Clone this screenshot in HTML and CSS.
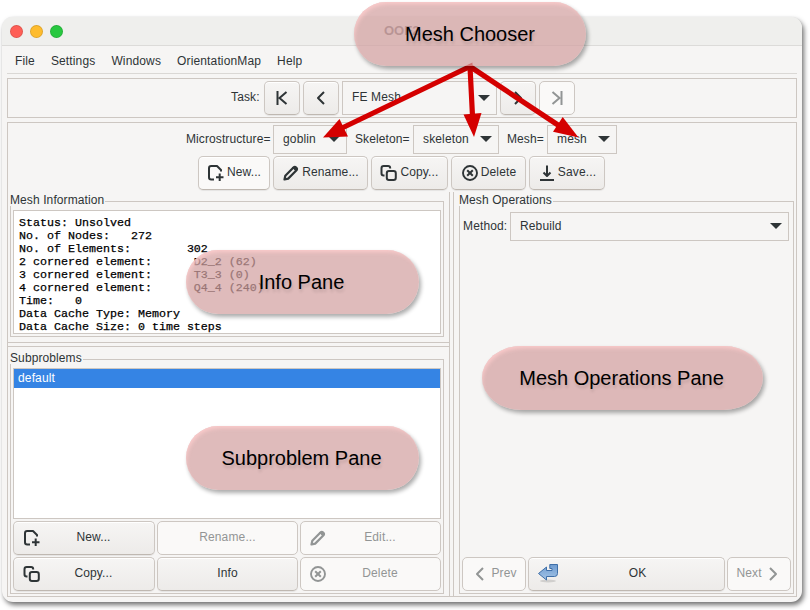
FILE: index.html
```html
<!DOCTYPE html>
<html lang="en">
<head>
<meta charset="utf-8">
<title>FE Mesh</title>
<link rel="stylesheet" href="styles.css">
</head>
<body>
<svg width="0" height="0" class="defs">
  <defs>
    <symbol id="i-new" viewBox="0 0 18 18"><path d="M7 15.500H4.200Q2 15.500 2 13.300V4.200Q2 2 4.200 2H10L14 6V7.500M12.700 9.500V17M9 13.200H16.500"/></symbol>
    <symbol id="i-pen" viewBox="0 0 18 18"><path d="M2.500 15.500L3.300 11.700L11.700 3.300Q12.800 2.300 14.200 3.500T14.500 6.300L6.200 14.600Z" stroke-width="2.200"/><path d="M10.500 3.500L14 3L15 5L13.800 7Z" fill="currentColor" stroke-width="1"/></symbol>
    <symbol id="i-copy" viewBox="0 0 18 18"><path d="M4.500 11.500H3.700Q1.500 11.500 1.500 9.300V4.200Q1.500 2 3.700 2H8Q10.200 2 10.200 4.200V4.500"/><rect x="6.800" y="7" width="9" height="9" rx="2.200"/></symbol>
    <symbol id="i-del" viewBox="0 0 18 18"><circle cx="9" cy="9" r="7" stroke-width="1.900"/><path d="M6.200 6.200L11.800 11.800M11.800 6.200L6.200 11.800" stroke-width="2"/></symbol>
    <symbol id="i-save" viewBox="0 0 18 18"><path d="M9 1.500V11.500M5.500 8.500L9 12L12.500 8.500M2 16H16"/></symbol>
    <symbol id="i-first" viewBox="0 0 18 18"><path d="M4.500 2V16M13.500 3L6.500 9L13.500 15"/></symbol>
    <symbol id="i-left" viewBox="0 0 18 18"><path d="M12 3L6 9L12 15"/></symbol>
    <symbol id="i-right" viewBox="0 0 18 18"><path d="M6 3L12 9L6 15"/></symbol>
    <symbol id="i-last" viewBox="0 0 18 18"><path d="M13.500 2V16M4.500 3L11.500 9L4.500 15"/></symbol>
    <linearGradient id="enter" x1="0" y1="0" x2="0" y2="1"><stop offset="0" stop-color="#6f9bd0"/><stop offset="1" stop-color="#a3c4e6"/></linearGradient>
  </defs>
</svg>
<div class="window">
  <header class="titlebar"><i class="dot red"></i><i class="dot yellow"></i><i class="dot green"></i><span class="wtitle">OOF2</span></header>
  <nav class="menubar"><span>File</span><span>Settings</span><span>Windows</span><span>OrientationMap</span><span>Help</span></nav>
  <section class="taskbar">
    <label>Task:</label>
    <button><svg><use href="#i-first"/></svg></button>
    <button><svg><use href="#i-left"/></svg></button>
    <div class="combo task">FE Mesh<b></b></div>
    <button><svg><use href="#i-right"/></svg></button>
    <button class="off"><svg><use href="#i-last"/></svg></button>
  </section>
  <main class="page">
    <div class="chooser">
      <label>Microstructure=</label><div class="combo c1">goblin<b></b></div>
      <label class="l2">Skeleton=</label><div class="combo c2">skeleton<b></b></div>
      <label class="l3">Mesh=</label><div class="combo c3">mesh<b></b></div>
    </div>
    <div class="tools">
      <button class="t1"><svg><use href="#i-new"/></svg>New...</button>
      <button class="t2"><svg><use href="#i-pen"/></svg>Rename...</button>
      <button class="t3"><svg><use href="#i-copy"/></svg>Copy...</button>
      <button class="t4"><svg><use href="#i-del"/></svg>Delete</button>
      <button class="t5"><svg><use href="#i-save"/></svg>Save...</button>
    </div>
    <div class="panes">
      <div class="left">
        <div class="pane infopane">
          <div class="frame"><h2>Mesh Information</h2>
<pre>Status: Unsolved
No. of Nodes:   272
No. of Elements:        302
2 cornered element:      D2_2 (62)
3 cornered element:      T3_3 (0)
4 cornered element:      Q4_4 (240)
Time:   0
Data Cache Type: Memory
Data Cache Size: 0 time steps</pre>
          </div>
        </div>
        <div class="pane subpane">
          <div class="frame"><h2>Subproblems</h2>
            <div class="list"><div class="row">default</div></div>
            <div class="grid">
              <button><svg><use href="#i-new"/></svg><span>New...</span></button>
              <button class="off plain"><span>Rename...</span></button>
              <button class="off"><svg><use href="#i-pen"/></svg><span>Edit...</span></button>
              <button><svg><use href="#i-copy"/></svg><span>Copy...</span></button>
              <button class="plain"><span>Info</span></button>
              <button class="off"><svg><use href="#i-del"/></svg><span>Delete</span></button>
            </div>
          </div>
        </div>
      </div>
      <div class="right">
        <div class="frame ops"><h2>Mesh Operations</h2>
          <div class="method"><label>Method:</label><div class="combo">Rebuild<b></b></div></div>
          <div class="nav">
            <button class="off prev"><svg><use href="#i-left"/></svg>Prev</button>
            <button class="ok"><svg class="enter" viewBox="0 0 22 20"><ellipse cx="11" cy="18" rx="8" ry="1.500" fill="#000" fill-opacity=".13" stroke="none"/><path d="M1.500 10.500L9.500 4V7.500H15V5.500H12.800V1.500H20.500V10.500Q20.500 13.500 17.500 13.500H9.500V17Z" fill="url(#enter)" stroke="#3f6fa8" stroke-width="1"/></svg><span>OK</span></button>
            <button class="off next">Next<svg><use href="#i-right"/></svg></button>
          </div>
        </div>
      </div>
    </div>
  </main>
</div>
<svg class="arrows" width="810" height="610" viewBox="0 0 810 610">
  <g stroke="#d40000" stroke-width="5.200" fill="none"><path d="M341 128.500L470 66.500L472.500 116"/><path d="M470 66.500L561 127"/></g>
  <g fill="#d40000"><path d="M323 137.500L339.500 119L348 136.500Z"/><path d="M474 137L463.500 114.500L481.500 113Z"/><path d="M578.500 137.500L562.700 117L553 131.700Z"/></g>
</svg>
<div class="pill p1">Mesh Chooser</div>
<div class="pill p2">Info Pane</div>
<div class="pill p3">Subproblem Pane</div>
<div class="pill p4">Mesh Operations Pane</div>
</body>
</html>
```
FILE: styles.css
```css
* { box-sizing: border-box; }
body { margin: 0; width: 810px; height: 610px; overflow: hidden; background: #fff; color: #2e3436; font: 12px/16px "Liberation Sans", Arial, sans-serif; letter-spacing: .14px; padding: 17px 0 0 2px; }
.defs { position: absolute; }
.window { width: 800px; height: 585px; background: #f6f5f4; border-radius: 11px; box-shadow: 2px 3px 5px rgba(0,0,0,.55), 0 0 1px rgba(0,0,0,.12); padding: 0 5px; }
.titlebar { height: 29px; margin: 0 -5px; padding-left: 8px; display: flex; align-items: center; gap: 7px; background: #efefed; border-bottom: 1px solid #dcdbd9; border-radius: 11px 11px 0 0; }
.dot { width: 13px; height: 13px; border-radius: 50%; border: .5px solid rgba(0,0,0,.12); }
.red { background: #ff5f57; } .yellow { background: #febc2e; } .green { background: #28c840; }
.wtitle { flex: 1; padding-left: 314px; font: bold 13px/28px "Liberation Sans", sans-serif; letter-spacing: 0; color: #757575; }
.menubar { height: 28px; display: flex; gap: 16px; align-items: center; padding: 3px 0 0 8px; border-bottom: 1px solid #dad8d5; }
.menubar span { white-space: nowrap; }
.taskbar { margin-top: 4px; height: 40px; border: 1px solid #cdc7c2; display: flex; align-items: center; gap: 3px; padding-left: 223px; }
.taskbar label { width: 30px; padding-bottom: 2px; }
button { appearance: none; font: inherit; letter-spacing: inherit; color: inherit; height: 34px; border: 1px solid #cdc7c2; border-bottom-color: #bfb8b1; border-radius: 5px; background: linear-gradient(#f6f5f4, #edebe9); box-shadow: 0 1px 1px rgba(0,0,0,.07), inset 0 1px #fff; padding: 0; display: flex; align-items: center; justify-content: center; white-space: nowrap; }
button svg { width: 18px; height: 18px; fill: none; stroke: currentColor; stroke-width: 2; stroke-linejoin: round; stroke-linecap: butt; flex: none; }
button.off { color: #929595; background: #faf9f8; border-color: #cdc7c2; box-shadow: none; }
.taskbar button { width: 36px; }
.combo { height: 29px; border: 1px solid #cdc7c2; display: flex; align-items: center; justify-content: space-between; padding: 0 6px 2px 9px; }
.combo b { border: 6px solid transparent; border-top-color: #2e3436; border-bottom: 0; margin-top: 1px; }
.combo.task { width: 155px; height: 34px; }
.page { margin-top: 4px; height: 475px; border: 1px solid #cdc7c2; padding-top: 2px; }
.chooser { display: flex; padding-left: 178px; align-items: center; }
.chooser label { width: 87px; padding-bottom: 2px; letter-spacing: .1px; }
.chooser .c1 { width: 74px; } .chooser .c2 { width: 86px; } .chooser .c3 { width: 70px; }
.chooser .l2 { width: 58px; margin-left: 8px; } .chooser .l3 { width: 40px; margin-left: 8px; }
.tools { display: flex; gap: 3px; padding-left: 190px; margin-top: 2px; }
.tools button { padding-bottom: 2px; gap: 2px; }
.tools svg { position: relative; top: 1px; }
.tools .t1 { width: 72px; background: #faf9f8; } .t2 { width: 95px; } .t3 { width: 77px; } .t4 { width: 75px; } .t5 { width: 76px; }
.panes { display: flex; gap: 3px; height: 404px; margin-top: 2px; }
.left { width: 442px; border-right: 1px solid #cdc7c2; display: flex; flex-direction: column; gap: 3px; }
.pane { padding: 9px 5px 0 2px; }
.infopane { height: 151px; border-bottom: 1px solid #cdc7c2; }
.subpane { flex: 1; border-top: 1px solid #cdc7c2; padding-top: 12px; }
.frame { border: 1px solid #cdc7c2; padding: 0 2px; }
h2 { font: inherit; letter-spacing: .1px; margin: -9px 0 0 -3px; height: 13px; line-height: 15px; background: #f6f5f4; width: fit-content; padding-right: 1px; white-space: nowrap; }
.infopane .frame { height: 136px; }
.infopane pre { margin: 4px 0 0; height: 124px; border: 1px solid #cdc7c2; background: #fff; color: #000; padding: 6px 5px 0; font: 11.67px/13px "Liberation Mono", monospace; letter-spacing: 0; -webkit-text-stroke: .25px #000; overflow: hidden; }
.subpane .frame { height: 235px; }
.list { margin-top: 4px; height: 151px; border: 1px solid #cdc7c2; background: #fff; }
.row { height: 19px; background: #3584e4; color: #fff; padding-left: 4px; line-height: 18px; }
.grid { margin-top: 2px; display: grid; grid-template-columns: 142px 141px 141px; gap: 2px; }
.grid button { padding: 0 0 2px 8px; }
.grid span { flex: 1; text-align: center; }
.grid svg { position: relative; top: 1px; left: 1px; }
.grid button svg + span { padding-right: 7px; }
.grid .off svg { left: 0; }
.grid .plain { padding-left: 0; }
.right { flex: 1; border-left: 1px solid #cdc7c2; padding: 9px 2px 0 5px; }
.ops { height: 393px; display: flex; flex-direction: column; }
.method { margin-top: 6px; display: flex; align-items: center; padding: 0 2px 0 1px; }
.method label { width: 47px; padding-bottom: 2px; }
.method .combo { width: 279px; }
.nav { margin-top: auto; margin-bottom: 2px; display: flex; gap: 2px; }
.nav button { padding-bottom: 2px; }
.prev, .next { width: 64px; gap: 2px; } .prev svg, .next svg { position: relative; top: 1px; }
.nav .ok { width: 197px; padding-left: 8px; }
.ok .enter { width: 22px; height: 20px; }
.ok span { flex: 1; padding-right: 8px; }
.arrows { position: absolute; left: 0; top: 0; }
.pill { position: absolute; height: 64px; width: 232px; border-radius: 32px; background: rgba(211,161,161,.72); box-shadow: 2px 3px 4px rgba(0,0,0,.33), inset 2px 4px 4px -2px rgba(255,205,205,.9); color: #000; font-size: 20px; line-height: 64px; text-align: center; text-shadow: 1px 3px 3px rgba(0,0,0,.13); letter-spacing: 0; white-space: nowrap; }
.p1 { left: 354px; top: 2px; }
.p2 { left: 186px; top: 250px; width: 233px; padding-right: 2px; }
.p3 { left: 186px; top: 426px; width: 233px; padding-right: 2px; }
.p4 { left: 482px; top: 346px; width: 281px; border-radius: 39px / 32px; padding-right: 2px; }
```
